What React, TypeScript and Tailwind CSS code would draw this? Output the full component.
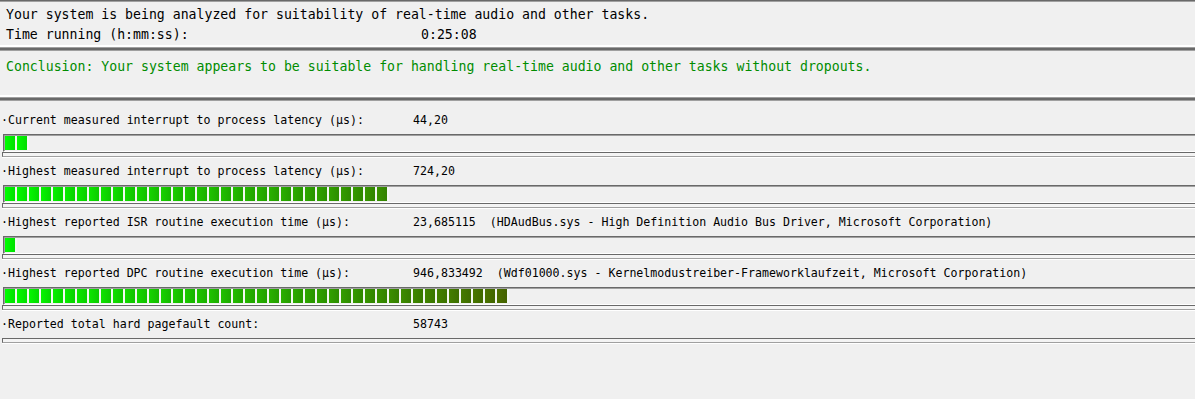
import React from 'react';

const rows = [
  { label: '·Current measured interrupt to process latency (µs):', value: '44,20', blocks: 2 },
  { label: '·Highest measured interrupt to process latency (µs):', value: '724,20', blocks: 32 },
  {
    label: '·Highest reported ISR routine execution time (µs):',
    value: '23,685115  (HDAudBus.sys - High Definition Audio Bus Driver, Microsoft Corporation)',
    blocks: 1,
  },
  {
    label: '·Highest reported DPC routine execution time (µs):',
    value: '946,833492  (Wdf01000.sys - Kernelmodustreiber-Frameworklaufzeit, Microsoft Corporation)',
    blocks: 42,
  },
];

// colour of block i, from bright green to olive
const blockColor = (i: number, shade = 1) => {
  const r = Math.round(i * 1.85 * shade);
  const g = Math.round((255 - i * 3.5) * shade);
  return `rgb(${r},${g},0)`;
};

const HeaderSep = () => (
  <div className="flex flex-col">
    <div className="h-[2px] bg-white" />
    <div className="h-px bg-[#a0a0a0]" />
    <div className="h-[2px] bg-[#696969]" />
    <div className="h-px bg-[#a0a0a0]" />
  </div>
);

const Sep = () => (
  <div className="h-[5px] mb-px ml-[2px] border-t border-l border-b border-[#696969] border-b-[#a0a0a0] bg-[#f4f4f4] shadow-[0_1px_0_#ffffff]" />
);

const Bar = ({ blocks }: { blocks: number }) => (
  <div className="h-[18px] ml-[3px] flex pt-px pl-px border-t border-l border-[#696969] border-b border-b-white shadow-[inset_1px_1px_0_#a0a0a0]">
    {Array.from({ length: blocks }).map((_, i) => (
      <div
        key={i}
        className="h-[14px] w-[12px] shrink-0 border-r-2 border-[#f4f8f4]"
        style={{ background: `linear-gradient(to right, ${blockColor(i)}, ${blockColor(i, 0.88)})` }}
      />
    ))}
  </div>
);

export default function App() {
  return (
    <div className="w-full h-[399px] overflow-hidden bg-[#f0f0f0] text-black font-['DejaVu_Sans_Mono',monospace]">
      <div className="h-px bg-[#696969]" />
      <div className="h-px bg-[#a0a0a0]" />

      <div className="pt-[3px] pl-[6px] text-[13.2px] leading-[20px]">
        <div>Your system is being analyzed for suitability of real-time audio and other tasks.</div>
        <div className="flex">
          <div className="w-[415px] shrink-0">Time running (h:mm:ss):</div>
          <div>0:25:08</div>
        </div>
      </div>
      <HeaderSep />

      <div className="h-[44px] pt-[6px] pl-[6px] text-[13.2px] leading-[20px] text-[#008c00]">
        Conclusion: Your system appears to be suitable for handling real-time audio and other tasks without dropouts.
      </div>
      <HeaderSep />

      <div className="mt-[6px] text-[11.6px]">
        {rows.map((r) => (
          <div key={r.label}>
            <div className="h-[27px] pt-[3px] flex leading-[20px]">
              <div className="w-[413px] shrink-0 pl-px">{r.label}</div>
              <div className="whitespace-pre">{r.value}</div>
            </div>
            <Bar blocks={r.blocks} />
            <Sep />
          </div>
        ))}
        <div className="h-[27px] pt-[3px] flex leading-[20px]">
          <div className="w-[413px] shrink-0 pl-px">·Reported total hard pagefault count:</div>
          <div>58743</div>
        </div>
        <Sep />
      </div>
    </div>
  );
}
